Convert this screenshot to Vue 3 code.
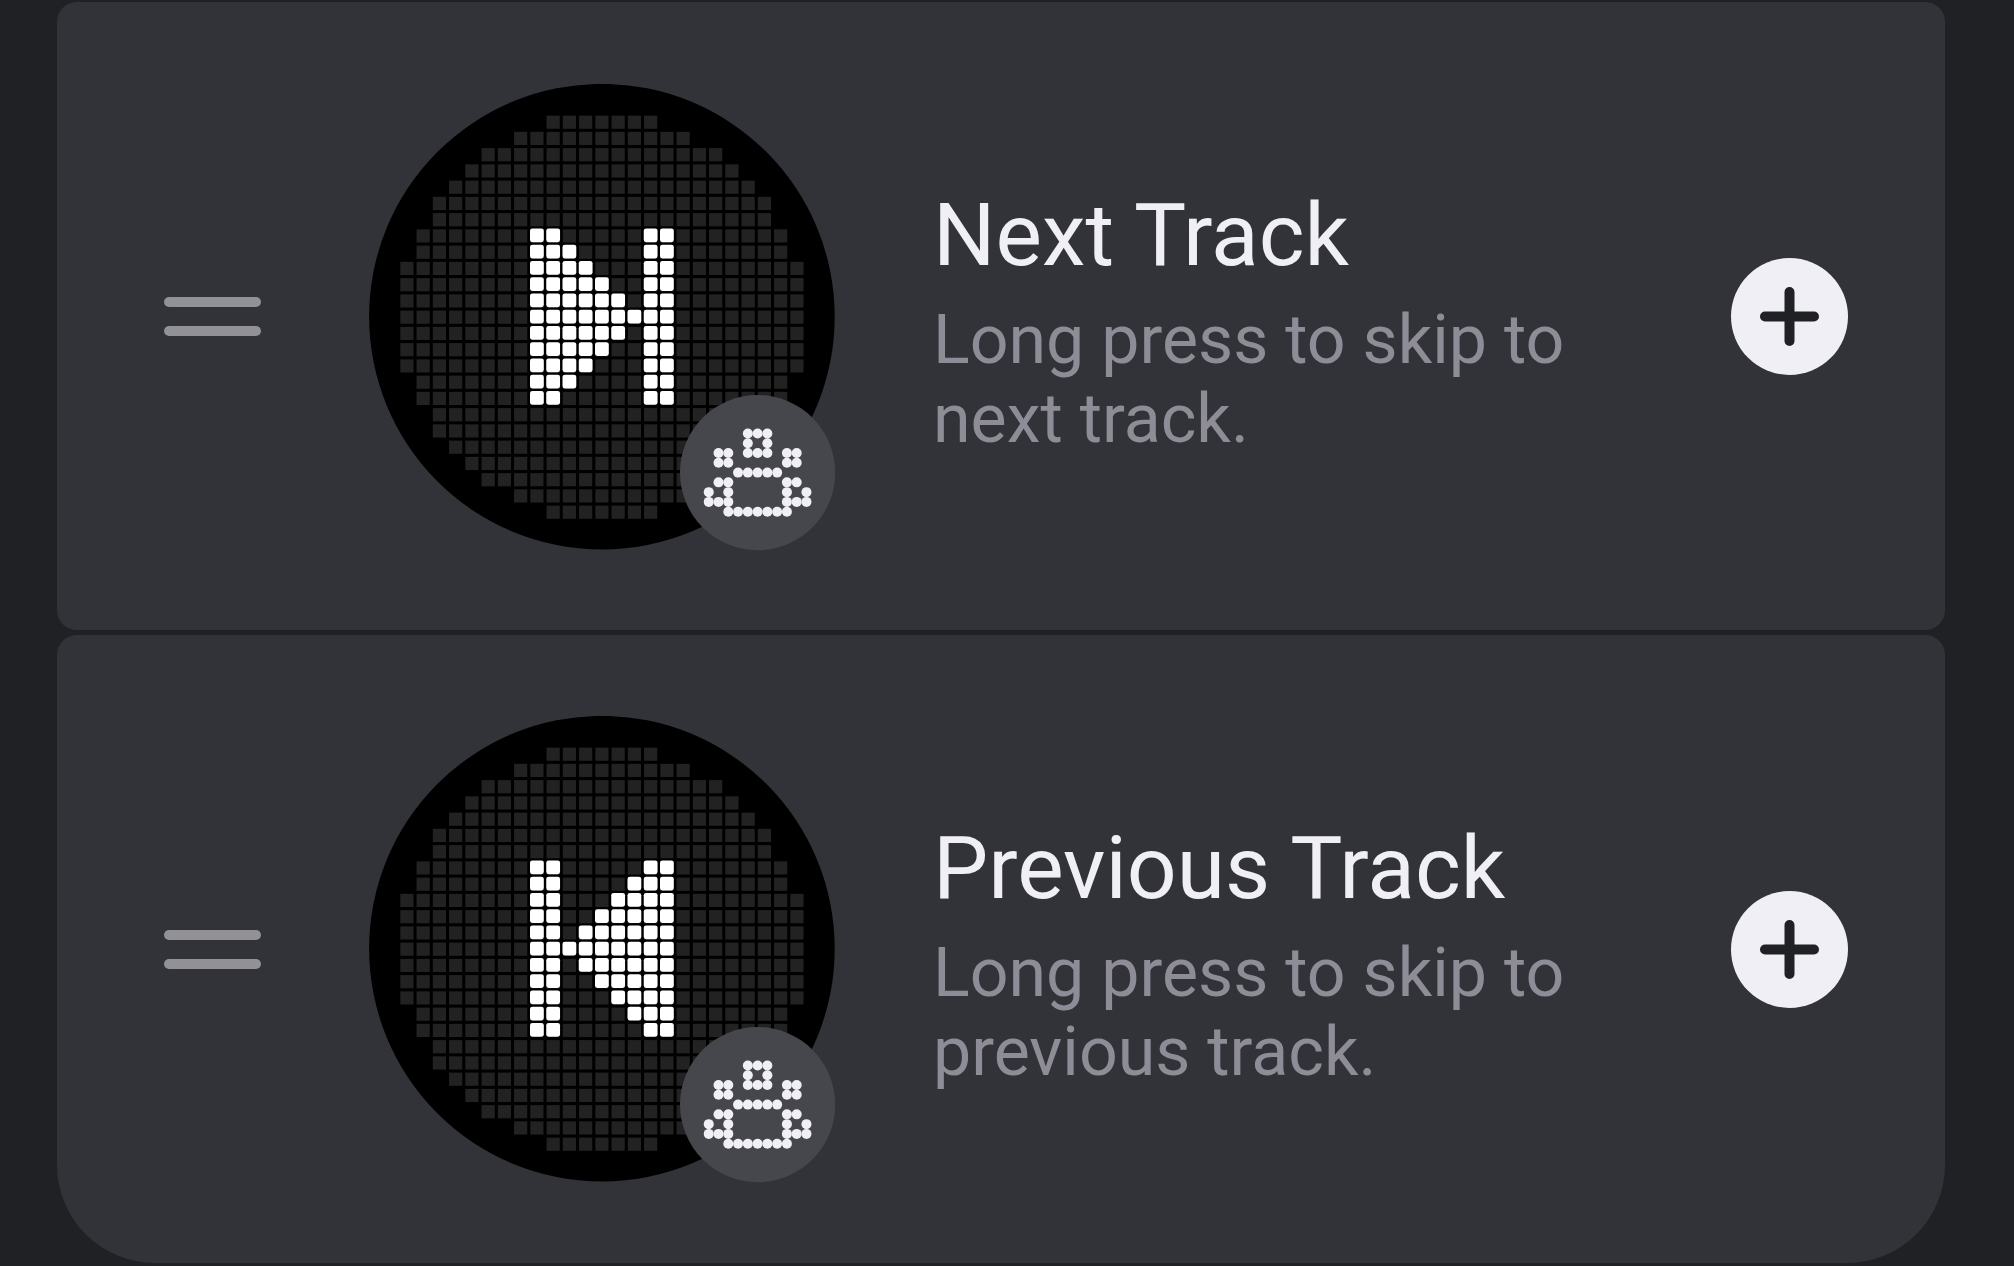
<template>
  <main class="toy-list">
    <section v-for="toy in toys" :key="toy.title" class="toy-card">
      <div class="handle">
        <span></span>
        <span></span>
      </div>

      <div class="preview">
        <svg class="matrix" viewBox="0 0 466 466">
          <circle cx="232.9" cy="232.7" r="232.8" fill="#000" />
          <rect
            v-for="cell in baseCells"
            :key="`${cell.x}-${cell.y}`"
            :x="31.3 + cell.x * 16.25"
            :y="31.6 + cell.y * 16.25"
            width="13.2"
            height="13.2"
            fill="#222"
          />
          <rect
            v-for="cell in toy.cells"
            :key="`lit-${cell.x}-${cell.y}`"
            :x="31 + cell.x * 16.25"
            :y="30.7 + cell.y * 16.25"
            width="13.8"
            height="13.8"
            rx="2.4"
            fill="#fff"
          />
        </svg>
        <svg class="badge" viewBox="0 0 156 156">
          <circle cx="77.6" cy="77.6" r="77.6" fill="#46474c" />
          <circle
            v-for="dot in badgeDots"
            :key="`${dot.x}-${dot.y}`"
            :cx="77.6 + (dot.x - 5) * 9.77"
            :cy="77.6 + (dot.y - 4) * 9.77"
            r="5"
            fill="#f0eff5"
          />
        </svg>
      </div>

      <div class="info">
        <h2>{{ toy.title }}</h2>
        <p>{{ toy.text }}</p>
      </div>

      <button class="add" :aria-label="`Add ${toy.title}`">
        <svg viewBox="0 0 117 117">
          <path d="M58.5 34v49M34 58.5h49" stroke="#202125" stroke-width="10" stroke-linecap="round" />
        </svg>
      </button>
    </section>
  </main>
</template>

<script setup>

const rowWidths = [7, 11, 15, 17, 19, 21, 21, 23, 23, 25, 25, 25, 25, 25, 25, 25, 23, 23, 21, 21, 19, 17, 15, 11, 7];

const baseCells = rowWidths.flatMap((width, y) =>
  Array.from({ length: width }, (_, i) => ({ x: (25 - width) / 2 + i, y }))
);

// turn rows of # characters into grid positions
const parse = (rows, left = 0, top = 0) =>
  rows.flatMap((row, y) =>
    [...row].map((char, x) => ({ char, x: x + left, y: y + top })).filter((cell) => cell.char === '#')
  );

const nextGlyph = [
  '##.....##',
  '###....##',
  '####...##',
  '#####..##',
  '######.##',
  '#########',
  '######.##',
  '#####..##',
  '####...##',
  '###....##',
  '##.....##',
];
const previousGlyph = nextGlyph.map((row) => [...row].reverse().join(''));

const badgeDots = parse([
  '....###....',
  '....#.#....',
  '.##.###.##.',
  '.##.....##.',
  '...#####...',
  '.##.....##.',
  '#.#.....#.#',
  '###.....###',
  '..#######..',
]);

const toys = [
  {
    title: 'Next Track',
    text: 'Long press to skip to next track.',
    cells: parse(nextGlyph, 8, 7),
  },
  {
    title: 'Previous Track',
    text: 'Long press to skip to previous track.',
    cells: parse(previousGlyph, 8, 7),
  },
];

</script>

<style>
body {
  margin: 0;
  background: #202125;
}
</style>

<style scoped>
.toy-list {
  box-sizing: border-box;
  display: flex;
  flex-direction: column;
  gap: 4.67px;
  height: 1266px;
  padding: 2.33px 69px 0 57px;
  overflow: hidden;
  font-family: Roboto, sans-serif;
}

.toy-card {
  box-sizing: border-box;
  flex: none;
  display: flex;
  align-items: center;
  height: 628px;
  padding: 1px 97px 0 107px;
  border-radius: 20px;
  background: #323338;
}

.toy-card:last-child {
  border-radius: 20px 20px 98px 98px;
}

.handle {
  display: flex;
  flex-direction: column;
  gap: 19px;
  width: 97px;
  margin-right: 108px;
}

.handle span {
  height: 10px;
  border-radius: 5px;
  background: #919196;
}

.preview {
  position: relative;
  width: 466px;
  height: 466px;
  margin-right: 98px;
}

.matrix {
  display: block;
  width: 466px;
  height: 466px;
}

.badge {
  position: absolute;
  right: -1px;
  bottom: -1px;
  width: 156px;
  height: 156px;
}

.info {
  flex: 1;
  margin-right: 109px;
  padding-top: 11px;
}

h2 {
  margin: 0 0 16px;
  color: #f0eff5;
  font-size: 87.6px;
  font-weight: 400;
  line-height: 100px;
}

p {
  margin: 0;
  color: #8e8d97;
  font-size: 68.1px;
  line-height: 79.4px;
}

.add {
  width: 117px;
  height: 117px;
  padding: 0;
  border: 0;
  border-radius: 50%;
  background: #f0eff5;
}

.add svg {
  display: block;
}
</style>
